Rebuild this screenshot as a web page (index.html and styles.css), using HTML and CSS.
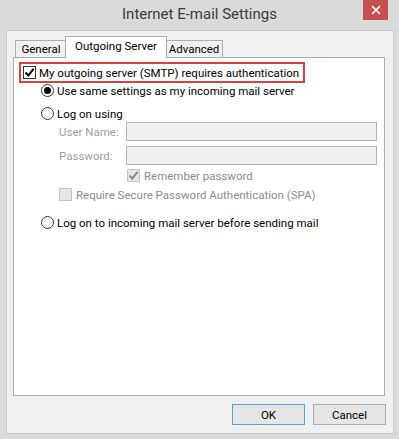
FILE: index.html
```html
<!DOCTYPE html>
<html>
<head>
<meta charset="utf-8">
<link rel="stylesheet" href="styles.css">
</head>
<body>
<div class="window">
  <div class="titlebar">
    <div class="title">Internet E-mail Settings</div>
    <div class="close"><svg width="10" height="10" viewBox="0 0 10 10"><path d="M1 1 L9 9 M9 1 L1 9" stroke="#fff" stroke-width="1.6"/></svg></div>
  </div>
  <div class="client">
    <div class="tabs">
      <div class="tab tab-general">General</div>
      <div class="tab tab-active">Outgoing Server</div>
      <div class="tab tab-advanced">Advanced</div>
    </div>
    <div class="panel">
      <div class="auth">
        <span class="cb"><svg width="11" height="11" viewBox="0 0 11 11"><path d="M1.5 5.5 L4.3 8.4 L9.6 1.8" fill="none" stroke="#000" stroke-width="2"/></svg></span>
        <span>My outgoing server (SMTP) requires authentication</span>
      </div>
      <div class="row row-same"><span class="radio on"></span><span>Use same settings as my incoming mail server</span></div>
      <div class="row row-logon"><span class="radio"></span><span>Log on using</span></div>
      <div class="fields">
        <span class="lbl">User Name:</span><div class="input"></div>
        <span class="lbl">Password:</span><div class="input"></div>
      </div>
      <div class="row row-remember disabled">
        <span class="cb cb-dis"><svg width="11" height="11" viewBox="0 0 11 11"><path d="M1.5 5.5 L4.3 8.4 L9.6 1.8" fill="none" stroke="#8a8a8a" stroke-width="2"/></svg></span>
        <span>Remember password</span>
      </div>
      <div class="row row-spa disabled"><span class="cb cb-dis"></span><span>Require Secure Password Authentication (SPA)</span></div>
      <div class="row row-incoming"><span class="radio"></span><span>Log on to incoming mail server before sending mail</span></div>
    </div>
    <div class="buttons">
      <div class="btn btn-default">OK</div>
      <div class="btn">Cancel</div>
    </div>
  </div>
</div>
</body>
</html>
```
FILE: styles.css
```css
* { box-sizing: border-box; }
html, body { margin: 0; padding: 0; }
body {
  background: #dadada;
  font-family: Roboto, "Open Sans", sans-serif;
  font-size: 11.5px;
  color: #000;
  white-space: nowrap;
}
.window {
  width: 399px;
  height: 439px;
  background: #dadada;
  display: flex;
  flex-direction: column;
}
.titlebar {
  height: 30px;
  display: grid;
  grid-template-columns: 1fr auto 1fr;
  align-items: start;
}
.title {
  grid-column: 2;
  font-size: 15px;
  color: #3c3c3c;
  line-height: 18px;
  padding-top: 5px;
}
.close {
  grid-column: 3;
  justify-self: end;
  margin-right: 11px;
  width: 25px;
  height: 20px;
  background: #c75050;
  display: flex;
  align-items: center;
  justify-content: center;
}
.client {
  margin-left: 6px;
  width: 388px;
  height: 404px;
  background: #f0f0f0;
  border: 1px solid #c9c9c9;
  display: flex;
  flex-direction: column;
}
.tabs {
  display: flex;
  align-items: flex-end;
  margin-top: 5px;
  margin-left: 8px;
  height: 21px;
}
.tab {
  height: 17px;
  border: 1px solid #acacac;
  border-bottom: none;
  background: #f0f0f0;
  display: flex;
  align-items: center;
  justify-content: center;
  line-height: 1;
  padding-top: 1px;
}
.tab-general { width: 52px; }
.tab-active {
  width: 102px;
  height: 22px;
  margin-left: -2px;
  margin-right: -2px;
  margin-bottom: -1px;
  background: #fff;
  position: relative;
  z-index: 1;
  padding-top: 0;
  padding-bottom: 2px;
}
.tab-advanced { width: 58px; }
.panel {
  margin-left: 6px;
  width: 372px;
  height: 339px;
  background: #fff;
  border: 1px solid #acacac;
  display: flex;
  flex-direction: column;
}
.auth {
  margin: 4px 0 0 5px;
  width: 286px;
  height: 21px;
  border: 2px solid #dc3f3f;
  display: flex;
  align-items: center;
  padding-left: 2px;
  gap: 3px;
}
.cb {
  width: 13px;
  height: 13px;
  border: 1px solid #333;
  background: #fff;
  display: flex;
  align-items: center;
  justify-content: center;
  flex: none;
}
.cb-dis {
  border-color: #c4c4c4;
  background: #e6e6e6;
}
.row {
  height: 15px;
  display: flex;
  align-items: center;
  gap: 3px;
}
.radio {
  width: 13px;
  height: 13px;
  border-radius: 50%;
  border: 1px solid #333;
  background: #fff;
  flex: none;
  display: flex;
  align-items: center;
  justify-content: center;
}
.radio.on::after {
  content: "";
  width: 7px;
  height: 7px;
  border-radius: 50%;
  background: #000;
}
.row-same { margin-top: 0; padding-left: 27px; }
.row-logon { margin-top: 8px; padding-left: 27px; }
.fields {
  margin-top: 1px;
  padding-left: 45px;
  display: grid;
  grid-template-columns: 67px 251px;
  row-gap: 5px;
  align-items: center;
}
.lbl { color: #a0a0a0; }
.input {
  height: 19px;
  background: #efefef;
  border: 1px solid #adb4bb;
}
.disabled { color: #8c8c8c; }
.row-remember { margin-top: 3px; padding-left: 113px; gap: 4px; }
.row-spa { margin-top: 4px; padding-left: 45px; gap: 4px; }
.row-incoming { margin-top: 13px; padding-left: 27px; }
.buttons {
  margin-top: 8px;
  display: flex;
  justify-content: flex-end;
  gap: 8px;
  padding-right: 7px;
}
.btn {
  width: 73px;
  height: 21px;
  border: 1px solid #acacac;
  background: #e5e5e5;
  display: flex;
  align-items: center;
  justify-content: center;
}
.btn-default {
  border-color: #5a9fdc;
}
```
